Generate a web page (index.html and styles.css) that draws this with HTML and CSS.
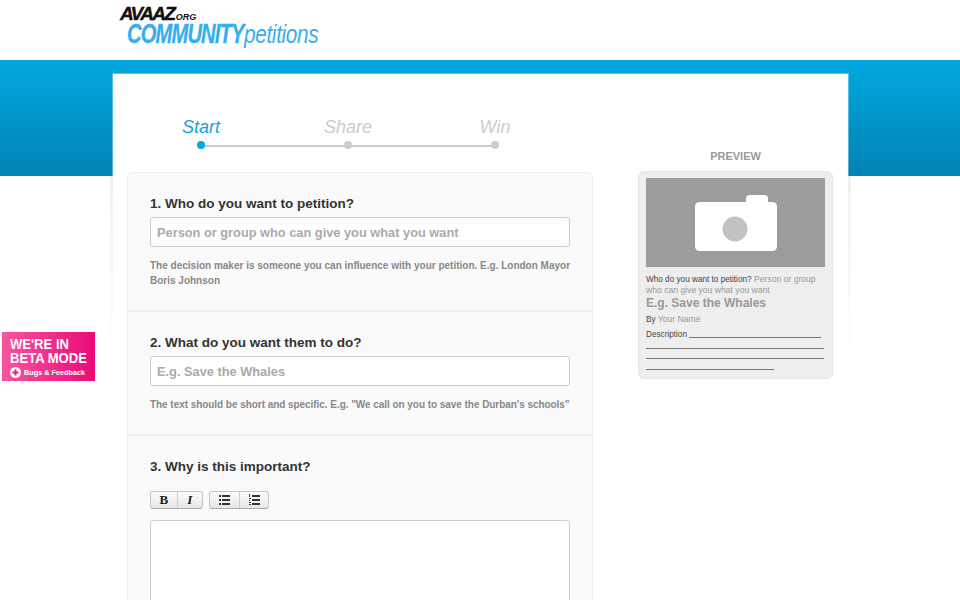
FILE: index.html
```html
<!DOCTYPE html>
<html lang="en">
<head>
    <meta charset="UTF-8">
    <title>Avaaz Community Petitions</title>
    <link rel="stylesheet" href="styles.css">
</head>
<body>
    <header class="top">
        <div class="logo">
            <div class="logo-avaaz">AVAAZ<span class="logo-org">.ORG</span></div>
            <div class="logo-community"><span class="logo-com">COMMUNITY</span><span class="logo-pet">petitions</span></div>
        </div>
    </header>

    <a class="beta" href="#">
        <span class="beta-title">WE'RE IN<br>BETA MODE</span>
        <span class="beta-link">
            <svg width="11" height="11" viewBox="0 0 11 11"><circle cx="5.500" cy="5.500" r="5.500" fill="#fff"/><path d="M4.500 2.500h2v2h2v2h-2v2h-2v-2h-2v-2h2z" fill="#ee1c7f"/></svg>
            <span class="beta-text">Bugs &amp; Feedback</span>
        </span>
    </a>

    <div class="band">
        <div class="sheet">
            <div class="columns">
                <div class="left">
                    <ol class="steps">
                        <li class="step active"><span class="step-name">Start</span><span class="dot"></span></li>
                        <li class="step"><span class="step-name">Share</span><span class="dot"></span></li>
                        <li class="step"><span class="step-name">Win</span><span class="dot"></span></li>
                    </ol>
                    <form class="card">
                        <div class="sec sec1">
                            <label class="q">1. Who do you want to petition?</label>
                            <input class="field" type="text" placeholder="Person or group who can give you what you want">
                            <p class="help">The decision maker is someone you can influence with your petition. E.g. London Mayor Boris Johnson</p>
                        </div>
                        <div class="sec sec2">
                            <label class="q">2. What do you want them to do?</label>
                            <input class="field" type="text" placeholder="E.g. Save the Whales">
                            <p class="help">The text should be short and specific. E.g. "We call on you to save the Durban's schools"</p>
                        </div>
                        <div class="sec sec3">
                            <label class="q">3. Why is this important?</label>
                            <div class="toolbar">
                                <div class="btn-group">
                                    <button class="tb tb-b" type="button">B</button>
                                    <button class="tb tb-i" type="button">I</button>
                                </div>
                                <div class="btn-group">
                                    <button class="tb tb-list" type="button">
                                        <svg width="11" height="10" viewBox="0 0 11 10"><path d="M0 0h2v2H0zM0 4h2v2H0zM0 8h2v2H0zM3 0h8v2H3zM3 4h8v2H3zM3 8h8v2H3z" fill="#333"/></svg>
                                    </button>
                                    <button class="tb tb-list" type="button">
                                        <svg width="11" height="12" viewBox="0 0 11 12"><path d="M0 0h1v3H0zM0 4h2v1H0zM0 6h1v1H0zM0 8h2v1H0zM0 10h2v1H0zM3 1h8v2H3zM3 5h8v2H3zM3 9h8v2H3z" fill="#333"/></svg>
                                    </button>
                                </div>
                            </div>
                            <textarea class="area"></textarea>
                        </div>
                    </form>
                </div>
                <aside class="right">
                    <h3 class="preview-label">PREVIEW</h3>
                    <div class="preview">
                        <div class="preview-img">
                            <svg width="84" height="56" viewBox="0 0 84 56">
                                <path d="M6 7H52V3.500Q52 0 55.500 0H70.500Q74 0 74 3.500V7H78Q83 7 83 12V51Q83 56 78 56H6Q1 56 1 51V12Q1 7 6 7Z" fill="#fff"/>
                                <circle cx="41" cy="34" r="12.500" fill="#c2c2c2"/>
                            </svg>
                        </div>
                        <p class="pv-who"><b>Who do you want to petition?</b> Person or group who can give you what you want</p>
                        <p class="pv-title">E.g. Save the Whales</p>
                        <p class="pv-by"><b>By</b> Your Name</p>
                        <div class="pv-desc"><span>Description</span><i class="pv-line"></i></div>
                        <i class="pv-line pv-full"></i>
                        <i class="pv-line pv-full pv-third"></i>
                        <i class="pv-line pv-short"></i>
                    </div>
                </aside>
            </div>
        </div>
    </div>
</body>
</html>
```

FILE: styles.css
```css
html, body {
    height: 600px;
    overflow: hidden;
}
body {
    margin: 0;
    background: #fff;
    font-family: 'Liberation Sans', Arial, sans-serif;
    color: #333;
}
.top {
    height: 60px;
    overflow: hidden;
}
.logo {
    padding: 6px 0 0 120px;
}
.logo-avaaz {
    height: 16px;
    font-size: 19px;
    line-height: 16px;
    font-weight: bold;
    font-style: italic;
    letter-spacing: -1.7px;
    color: #111;
    -webkit-text-stroke: .4px #111;
}
.logo-org {
    font-size: 9px;
    letter-spacing: 0;
    margin-left: -1px;
    -webkit-text-stroke: 0;
}
.logo-community {
    display: flex;
    padding-left: 7px;
    font-style: italic;
    color: #35aef0;
    white-space: nowrap;
}
.logo-com {
    display: block;
    width: 117px;
    font-size: 27px;
    line-height: 25px;
    font-weight: bold;
    letter-spacing: -1.1px;
    -webkit-text-stroke: .3px #35aef0;
    transform: scaleX(.745);
    transform-origin: left center;
}
.logo-pet {
    display: block;
    width: 75px;
    font-size: 25px;
    line-height: 25px;
    letter-spacing: -.4px;
    transform: scaleX(.83);
    transform-origin: left center;
}

.beta {
    position: absolute;
    left: 2px;
    top: 332px;
    width: 93px;
    height: 49px;
    box-sizing: border-box;
    padding: 5px 0 0 8px;
    background: linear-gradient(90deg, #f9559f, #ea0a77);
    color: #fff;
    text-decoration: none;
    z-index: 2;
}
.beta-title {
    display: block;
    width: 90px;
    font-size: 15px;
    line-height: 14px;
    font-weight: bold;
    white-space: nowrap;
    transform: scaleX(.87);
    transform-origin: left center;
}
.beta-link {
    display: flex;
    align-items: center;
    gap: 3px;
    margin-top: 2px;
}
.beta-text {
    width: 61px;
    font-size: 8px;
    line-height: 11px;
    font-weight: bold;
    white-space: nowrap;
    transform: scaleX(.91);
    transform-origin: left center;
}

.band {
    padding-top: 14px;
    background: linear-gradient(#00a8df, #0083b5) no-repeat;
    background-size: 100% 116px;
}
.sheet {
    position: relative;
    width: 735px;
    height: 600px;
    margin-left: 113px;
    background: #fff;
    box-shadow: 0 0 0 1px rgba(255, 255, 255, .35);
}
.sheet::before,
.sheet::after {
    content: "";
    position: absolute;
    top: 102px;
    width: 3px;
    height: 190px;
    background: linear-gradient(#f1f1f1, #fff);
}
.sheet::before { left: -3px; }
.sheet::after { right: -3px; }
.columns {
    display: flex;
    padding-left: 14px;
}
.left {
    width: 466px;
}

.steps {
    position: relative;
    display: flex;
    justify-content: space-between;
    width: 354px;
    height: 98px;
    box-sizing: border-box;
    margin: 0 0 0 44px;
    padding: 43px 0 0;
    list-style: none;
}
.steps::before {
    content: "";
    position: absolute;
    left: 30px;
    right: 30px;
    top: 71px;
    height: 2px;
    background: #ccc;
}
.step {
    display: flex;
    flex-direction: column;
    align-items: center;
    width: 60px;
}
.step-name {
    font-size: 18px;
    line-height: 21px;
    font-style: italic;
    color: #ccc;
}
.dot {
    position: relative;
    width: 8px;
    height: 8px;
    margin-top: 3px;
    border-radius: 50%;
    background: #ccc;
}
.active .step-name { color: #12a5dc; }
.active .dot { background: #00a8df; }

.card {
    box-sizing: border-box;
    height: 460px;
    border: 1px solid #ececec;
    border-radius: 6px;
    background: #fafafa;
}
.sec {
    box-sizing: border-box;
    padding: 22px 22px 0;
    border-bottom: 2px solid #f0f0f0;
}
.sec1 { height: 139px; }
.sec2 { height: 124px; }
.sec3 { border-bottom: 0; }
.q {
    display: block;
    font-size: 13.500px;
    line-height: 18px;
    font-weight: bold;
    color: #333;
}
.field {
    display: block;
    box-sizing: border-box;
    width: 420px;
    height: 30px;
    margin: 4px 0 0;
    padding: 0 6px;
    border: 1px solid #ccc;
    border-radius: 3px;
    background: #fff;
    font-family: inherit;
    font-size: 12.800px;
    font-weight: bold;
}
.field::placeholder {
    color: #aaa;
    opacity: 1;
}
.help {
    width: 424px;
    margin: 11px 0 0;
    font-size: 10px;
    line-height: 15px;
    font-weight: bold;
    color: #888;
}
.sec2 .help {
    letter-spacing: -.05px;
}
.toolbar {
    display: flex;
    gap: 6px;
    margin-top: 15px;
}
.btn-group {
    display: flex;
    height: 16px;
    border: 1px solid #c4c4c4;
    border-bottom-color: #aaa;
    border-radius: 3px;
    background: linear-gradient(#fdfdfd, #e6e6e6);
}
.tb {
    display: flex;
    align-items: center;
    justify-content: center;
    width: 25.500px;
    padding: 0;
    border: 0;
    background: none;
    font-family: 'Liberation Serif', serif;
    font-size: 13px;
    color: #222;
}
.tb + .tb { border-left: 1px solid #ccc; }
.tb-b { font-weight: bold; }
.tb-i { font-style: italic; font-weight: bold; }
.tb-list { width: 29px; }
.area {
    display: block;
    box-sizing: border-box;
    width: 420px;
    height: 200px;
    margin-top: 11px;
    border: 1px solid #ccc;
    border-radius: 3px;
    background: #fff;
    resize: none;
}

.right {
    width: 195px;
    margin-left: 45px;
    padding-top: 75px;
}
.preview-label {
    margin: 0 0 8px;
    font-size: 11px;
    line-height: 14px;
    font-weight: bold;
    text-align: center;
    color: #999;
}
.preview {
    box-sizing: border-box;
    height: 208px;
    padding: 6px 7px 0;
    border: 1px solid #e4e4e4;
    border-radius: 6px;
    background: #eee;
    font-size: 8.600px;
    line-height: 11px;
    color: #999;
}
.preview-img {
    display: flex;
    align-items: center;
    justify-content: center;
    height: 89px;
    background: #9c9c9c;
}
.pv-who {
    margin: 7px 0 0;
}
.pv-who b,
.pv-by b,
.pv-desc span {
    font-size: 8.200px;
    font-weight: normal;
    color: #444;
}
.pv-title {
    margin: 0;
    font-size: 12px;
    line-height: 15px;
    font-weight: bold;
    color: #999;
}
.pv-by {
    margin: 3px 0 0;
    line-height: 11px;
}
.pv-desc {
    display: flex;
    height: 12px;
    margin-top: 4px;
    line-height: 11px;
}
.pv-line {
    display: block;
    height: 1px;
    background: #777;
}
.pv-desc .pv-line {
    width: 132px;
    margin: 8px 0 0 2px;
}
.pv-full {
    width: 178px;
    margin-top: 7px;
}
.pv-third {
    margin-top: 9px;
}
.pv-short {
    width: 128px;
    margin-top: 10px;
}
```
